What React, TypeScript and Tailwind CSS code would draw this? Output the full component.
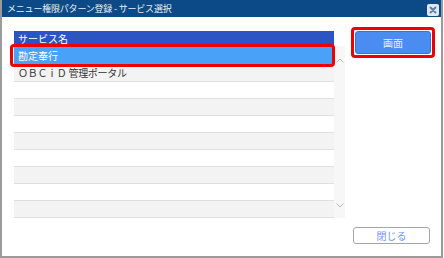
import React from "react";

const font = { fontFamily: '"Noto Sans CJK JP", "Noto Sans", sans-serif' };

export default function App() {
  const rows = [
    { label: "勘定奉行", selected: true },
    { label: "ＯＢＣｉＤ 管理ポータル" },
    {}, {}, {}, {}, {}, {}, {}, {},
  ];
  return (
    <div className="w-[444px] h-[258px] bg-white" style={font}>
      <div className="w-[443px] h-[258px] border-2 border-t-0 border-[#9a9a9a] flex flex-col bg-white">
        <div className="h-[17px] bg-[#0b4a86] flex items-center justify-between pl-[5px] pr-[2px]">
          <span className="text-[9px] text-[#e8eef6] leading-none tracking-[-0.2px]">メニュー権限パターン登録 - サービス選択</span>
          <div className="w-[12px] h-[12px] mt-[2px] rounded-[2px] bg-[#dfe7f0] flex items-center justify-center">
            <svg width="8" height="8" viewBox="0 0 8 8">
              <path d="M1.5 1.5 L6.5 6.5 M6.5 1.5 L1.5 6.5" stroke="#5a7ca8" strokeWidth="1.8" strokeLinecap="round" />
            </svg>
          </div>
        </div>
        <div className="flex flex-1">
          <div className="ml-[12px] mt-[14px] w-[331px]">
            <div className="w-[320px] h-[15px] bg-[#2b55c4] flex items-center pl-[4px]">
              <span className="text-[10px] text-white leading-none">サービス名</span>
            </div>
            <div className="flex">
              <div className="w-[320px]">
                {rows.map((r, i) => (
                  <div
                    key={i}
                    className={
                      r.selected
                        ? "relative h-[19px] bg-[#4aa2f8] flex items-center pl-[4px]"
                        : i % 2 === 1
                        ? "h-[17px] bg-[#f3f3f3] border-b border-[#e0e0e0] flex items-center pl-[4px]"
                        : "h-[17px] bg-white border-b border-[#e0e0e0] flex items-center pl-[4px]"
                    }
                  >
                    {r.label && (
                      <span className={r.selected ? "text-[10px] text-white leading-none" : "text-[10px] text-[#333] leading-none tracking-[-0.3px]"}>
                        {r.label}
                      </span>
                    )}
                    {r.selected && (
                      <div className="absolute left-[-4px] top-[-2px] w-[325px] h-[23px] border-[3px] border-[#ee0000] rounded-[4px]" />
                    )}
                  </div>
                ))}
              </div>
              <div className="w-[11px] bg-[#f7f7f7] flex flex-col justify-between items-center pt-[12px] pb-[10px]">
                <svg width="8" height="5" viewBox="0 0 8 5">
                  <path d="M0.5 4.5 L4 1 L7.5 4.5" stroke="#b8b8b8" strokeWidth="1" fill="none" />
                </svg>
                <svg width="8" height="5" viewBox="0 0 8 5">
                  <path d="M0.5 0.5 L4 4 L7.5 0.5" stroke="#b8b8b8" strokeWidth="1" fill="none" />
                </svg>
              </div>
            </div>
          </div>
          <div className="flex flex-col flex-1 items-start pl-[6px] pt-[10px] pb-[12px] justify-between">
            <div className="p-[1px] border-[3px] border-[#ee0000] rounded-[4px]">
              <div className="w-[76px] h-[23px] bg-[#4a8cf2] border border-[#3b72d8] rounded-[3px] flex items-center justify-center">
                <span className="text-[10px] text-[#e4ecfb] leading-none">画面</span>
              </div>
            </div>
            <div className="ml-[2px] w-[77px] h-[17px] bg-white border border-[#a5a5a5] rounded-[3px] flex items-center justify-center">
              <span className="text-[10px] text-[#7595e6] leading-none">閉じる</span>
            </div>
          </div>
        </div>
      </div>
    </div>
  );
}
